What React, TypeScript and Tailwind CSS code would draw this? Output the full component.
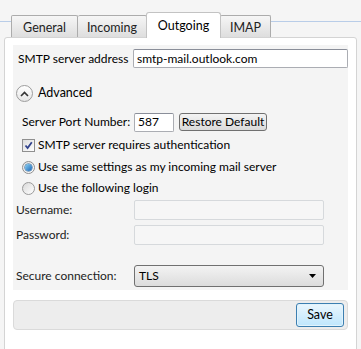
const FONT = { fontFamily: 'Lato, "Noto Sans", Arial, sans-serif' };

const TABS = [
  { label: 'General', w: 'w-[67px]' },
  { label: 'Incoming', w: 'w-[69px]' },
  { label: 'Outgoing', w: 'w-[75px]', active: true },
  { label: 'IMAP', w: 'w-[51px]' },
];

function Tabs() {
  return (
    <div className="relative h-[37px] text-[12.5px]">
      {/* thin blue rule behind the tabs */}
      <div className="absolute left-0 right-0 top-[21px] h-px bg-[#b9cde8]" />
      <div className="absolute left-[11px] bottom-0 flex items-end">
        {TABS.map(t =>
          t.active ? (
            <div
              key={t.label}
              className={`${t.w} h-[26px] -mb-px -mx-px z-10 flex items-start justify-center pt-[4px] bg-white border border-b-0 border-[#c3c3c3] rounded-t-[3px]`}
            >
              {t.label}
            </div>
          ) : (
            <div
              key={t.label}
              className={`${t.w} h-[22px] flex items-start justify-center pt-[3px] bg-gradient-to-b from-[#f6f6f6] to-[#dedede] border border-b-0 border-[#acacac] rounded-t-[2px] text-[#222] [&+&]:border-l-0`}
            >
              {t.label}
            </div>
          )
        )}
      </div>
    </div>
  );
}

function TextInput({ value, className = '' }: { value?: string; className?: string }) {
  return (
    <div
      className={`shrink-0 h-[19px] bg-white border border-[#abadb3] border-t-[#8a8e99] rounded-[2px] flex items-center px-[3px] leading-none ${className}`}
    >
      {value}
    </div>
  );
}

function DisabledInput() {
  return <div className="shrink-0 w-[190px] h-[20px] bg-[#f6f6f6] border border-[#d6d9dc] rounded-[2px]" />;
}

export default function App() {
  return (
    <div
      className="w-[361px] h-[349px] bg-[#f5f5f5] overflow-hidden text-[12px] text-black whitespace-nowrap"
      style={FONT}
    >
      <Tabs />
      <div className="ml-[4px] w-[353px] h-[330px] bg-white border border-[#d4d4d4] rounded-t-[3px] px-[8px] pt-[7px]">
        <div className="w-[335px] h-[245px] bg-[#f4f4f4] px-[4px] pt-[4px] flex flex-col">
          <div className="flex items-center h-[19px]">
            <span className="shrink-0 ml-px w-[115px]">SMTP server address</span>
            <TextInput value="smtp-mail.outlook.com" className="w-[215px]" />
          </div>

          <div className="flex items-center mt-[17px] h-[17px] -ml-[1px]">
            <div className="w-[17px] h-[17px] rounded-full border border-[#9c9c9c] bg-gradient-to-b from-white to-[#e6e6e6] flex items-center justify-center">
              <svg width="9" height="6" viewBox="0 0 9 6">
                <path d="M1 5 L4.5 1.5 L8 5" fill="none" stroke="#333" strokeWidth="1.6" />
              </svg>
            </div>
            <span className="ml-[5px] text-[12.5px]">Advanced</span>
          </div>

          <div className="flex items-center mt-[11px] h-[18px]">
            <span className="shrink-0 ml-[5px] w-[112px]">Server Port Number:</span>
            <TextInput value="587" className="w-[40px] h-[18px]" />
            <button className="shrink-0 ml-[5px] w-[88px] h-[18px] bg-gradient-to-b from-[#f3f3f3] to-[#dadada] border border-[#707070] rounded-[3px] leading-none">
              Restore Default
            </button>
          </div>

          <div className="flex items-center mt-[5px] h-[18px] ml-[5px]">
            <div className="w-[13px] h-[13px] border border-[#8f8f8f] bg-gradient-to-br from-[#dcdcdc] to-white flex items-center justify-center">
              <svg width="9" height="9" viewBox="0 0 9 9">
                <path d="M1.5 4.5 L3.6 7 L7.8 1.2" fill="none" stroke="#31428c" strokeWidth="1.8" />
              </svg>
            </div>
            <span className="ml-[3px]">SMTP server requires authentication</span>
          </div>

          <div className="flex items-center mt-[4px] h-[18px] ml-[5px]">
            <div className="w-[13px] h-[13px] rounded-full border border-[#8f8f8f] bg-gradient-to-br from-[#e2e2e2] to-white flex items-center justify-center">
              <div className="w-[7px] h-[7px] rounded-full bg-gradient-to-br from-[#8ad2f3] to-[#1a66b6] shadow-[0_0_0_0.5px_#245b8f]" />
            </div>
            <span className="ml-[3px]">Use same settings as my incoming mail server</span>
          </div>

          <div className="flex items-center mt-[3px] h-[18px] ml-[5px]">
            <div className="w-[13px] h-[13px] rounded-full border border-[#9a9a9a] bg-gradient-to-br from-[#d9d9d9] to-white" />
            <span className="ml-[3px]">Use the following login</span>
          </div>

          <div className="flex items-center mt-[3px] h-[20px] -ml-px">
            <span className="shrink-0 w-[118px] text-[#222]">Username:</span>
            <DisabledInput />
          </div>
          <div className="flex items-center mt-[5px] h-[20px] -ml-px">
            <span className="shrink-0 w-[118px] text-[#222]">Password:</span>
            <DisabledInput />
          </div>

          <div className="flex items-center mt-[20px] h-[22px] -ml-px">
            <span className="shrink-0 w-[118px] text-[#222]">Secure connection:</span>
            <div className="shrink-0 w-[190px] h-[22px] bg-gradient-to-b from-[#f3f3f3] to-[#dcdcdc] border border-[#707070] rounded-[3px] flex items-center justify-between pl-[4px] pr-[7px]">
              <span>TLS</span>
              <svg width="7" height="4" viewBox="0 0 7 4">
                <path d="M0 0 H7 L3.5 4 Z" fill="#000" />
              </svg>
            </div>
          </div>
        </div>

        <div className="mt-[10px] w-[335px] h-[30px] bg-[#ededed] border border-[#dadada] rounded-[4px] flex items-center justify-end pr-[3px]">
          <button className="w-[48px] h-[24px] bg-gradient-to-b from-[#eaf6fd] to-[#bee6fd] border border-[#3c7fb1] rounded-[3px] shadow-[inset_0_0_0_1px_#e2f3fc] leading-none text-[12.5px]">
            Save
          </button>
        </div>
      </div>
    </div>
  );
}
